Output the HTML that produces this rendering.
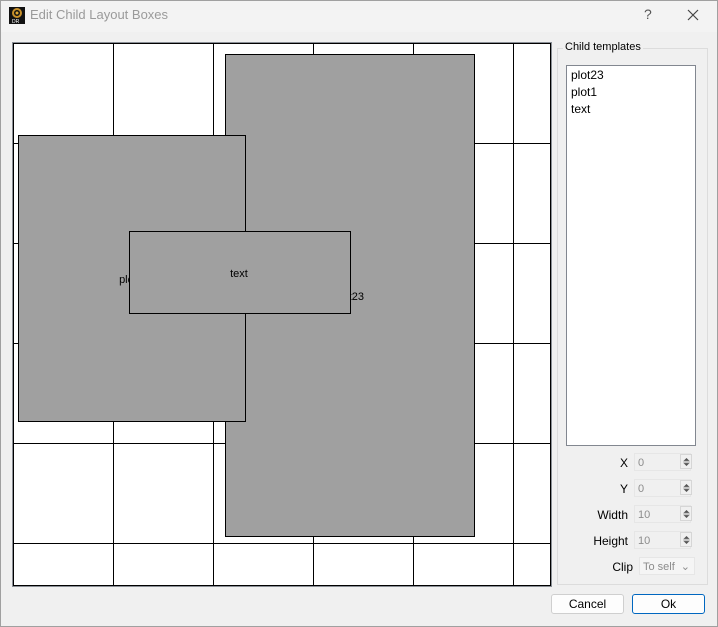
<!DOCTYPE html>
<html><head><style>
body{margin:0;width:718px;height:627px;background:#f0f0f0;font-family:"Segoe UI","Liberation Sans",sans-serif;font-size:12px;color:#000;position:relative;overflow:hidden}
.abs{position:absolute}
.win{left:0;top:0;width:716px;height:625px;border:1px solid #a0a0a0;background:#f0f0f0}
.title{left:1px;top:1px;width:716px;height:31px;background:#f3f3f3}
.lbl{text-align:right;width:60px;color:#000}
.spin{width:57px;height:18px;border:1px solid #e6e6e6;background:#f0f0f0;color:#8c8c8c;font-size:11px;line-height:18px;padding-left:3px;box-sizing:border-box}
.arr{width:12px;height:15px;border:1px solid #d6d6d6;background:#f0f0f0;box-sizing:border-box}
.arr svg{position:absolute;left:2px;top:2px}
.btn{height:20px;border:1px solid #cfcfcf;border-radius:3px;background:#fdfdfd;text-align:center;line-height:19px;box-sizing:border-box}
</style></head><body>
<div class="abs win"></div>
<div class="abs title"></div>
<svg class="abs" style="left:9px;top:7px" width="16" height="17" viewBox="0 0 16 17"><rect width="16" height="17" fill="#111"/><circle cx="8" cy="6" r="4" fill="none" stroke="#c8902a" stroke-width="2"/><circle cx="8" cy="6" r="1.5" fill="#e0a830"/><text x="3" y="16" font-size="5" fill="#fff" font-family="Liberation Sans">DR</text></svg>
<div class="abs" style="left:30px;top:7px;color:#9a9a9a;font-size:13px">Edit Child Layout Boxes</div>
<div class="abs" style="left:644px;top:6px;color:#555;font-size:14px">?</div>
<svg class="abs" style="left:687px;top:9px" width="12" height="12"><path d="M1 1L11 11M11 1L1 11" stroke="#444" stroke-width="1.2"/></svg>

<svg class="abs" style="left:12px;top:42px" width="540" height="545" viewBox="12 42 540 545" shape-rendering="crispEdges">
<rect x="12.5" y="42.5" width="539" height="544" fill="#fff" stroke="#8a8f96"/>
<g stroke="#000" stroke-width="1" fill="none">
<rect x="13.5" y="43.5" width="537" height="542"/>
<path d="M113.5 43V586M213.5 43V586M313.5 43V586M413.5 43V586M513.5 43V586M13 143.5H551M13 243.5H551M13 343.5H551M13 443.5H551M13 543.5H551"/>
</g>
<g font-family="Segoe UI, Liberation Sans, sans-serif" font-size="11" text-anchor="middle" fill="#000">
<rect x="225.5" y="54.5" width="249" height="482" fill="#a0a0a0" stroke="#000"/>
<text x="349" y="300">plot23</text>
<rect x="18.5" y="135.5" width="227" height="286" fill="#a0a0a0" stroke="#000"/>
<text x="131" y="283">plot1</text>
<rect x="129.5" y="231.5" width="221" height="82" fill="#a0a0a0" stroke="#000"/>
<text x="239" y="277">text</text>
</g>
</svg>

<div class="abs" style="left:557px;top:48px;width:149px;height:535px;border:1px solid #dcdcdc"></div>
<div class="abs" style="left:563px;top:41px;background:#f0f0f0;padding:0 2px;font-size:11px">Child templates</div>
<div class="abs" style="left:566px;top:65px;width:128px;height:379px;border:1px solid #828790;background:#fff"></div>
<div class="abs" style="left:571px;top:67px;line-height:17px;font-size:12px">plot23<br>plot1<br>text</div>

<div class="abs lbl" style="left:568px;top:456px">X</div>
<div class="abs spin" style="left:634px;top:453px">0</div>
<div class="abs arr" style="left:680px;top:454px"><svg width="7" height="10"><path d="M0.5 4L3.5 1L6.5 4ZM0.5 6L3.5 9L6.5 6Z M0 5H7" fill="#555" stroke="#999" stroke-width="0.5"/></svg></div>
<div class="abs lbl" style="left:568px;top:482px">Y</div>
<div class="abs spin" style="left:634px;top:479px">0</div>
<div class="abs arr" style="left:680px;top:480px"><svg width="7" height="10"><path d="M0.5 4L3.5 1L6.5 4ZM0.5 6L3.5 9L6.5 6Z M0 5H7" fill="#555" stroke="#999" stroke-width="0.5"/></svg></div>
<div class="abs lbl" style="left:568px;top:508px">Width</div>
<div class="abs spin" style="left:634px;top:505px">10</div>
<div class="abs arr" style="left:680px;top:506px"><svg width="7" height="10"><path d="M0.5 4L3.5 1L6.5 4ZM0.5 6L3.5 9L6.5 6Z M0 5H7" fill="#555" stroke="#999" stroke-width="0.5"/></svg></div>
<div class="abs lbl" style="left:568px;top:534px">Height</div>
<div class="abs spin" style="left:634px;top:531px">10</div>
<div class="abs arr" style="left:680px;top:532px"><svg width="7" height="10"><path d="M0.5 4L3.5 1L6.5 4ZM0.5 6L3.5 9L6.5 6Z M0 5H7" fill="#555" stroke="#999" stroke-width="0.5"/></svg></div>
<div class="abs lbl" style="left:573px;top:560px">Clip</div>
<div class="abs spin" style="left:639px;top:557px;width:56px;background:#f5f5f5">To self <span style="float:right;margin-right:4px">⌄</span></div>

<div class="abs btn" style="left:551px;top:594px;width:73px">Cancel</div>
<div class="abs btn" style="left:632px;top:594px;width:73px;border:1px solid #0067c0;background:#fdfdfd">Ok</div>
</body></html>
